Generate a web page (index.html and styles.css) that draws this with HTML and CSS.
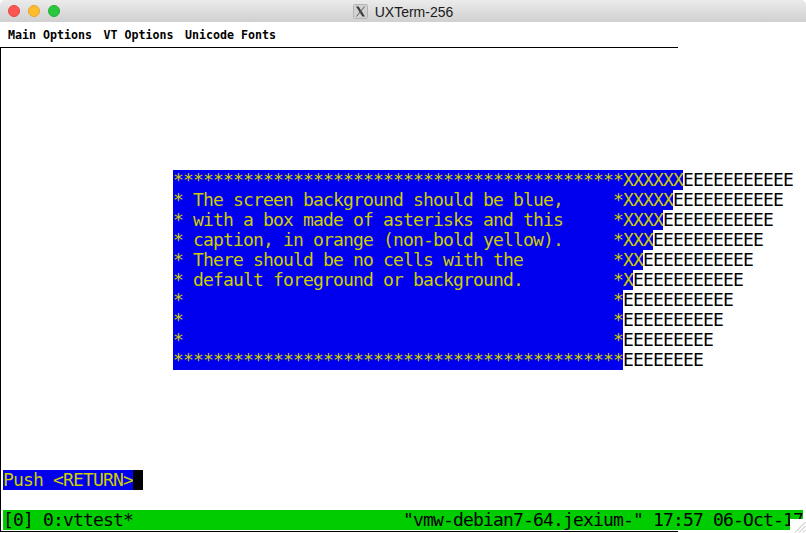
FILE: index.html
```html
<!DOCTYPE html>
<html lang="en">
<head>
<meta charset="utf-8">
<title>UXTerm-256</title>
<link rel="stylesheet" href="styles.css">
</head>
<body>
<div class="window">
  <header class="titlebar">
    <div class="lights">
      <span class="light light-red"></span>
      <span class="light light-yellow"></span>
      <span class="light light-green"></span>
    </div>
    <div class="title">
      <svg class="x-icon" width="15" height="15" viewBox="0 0 15 15">
        <rect x="0.5" y="0.5" width="14" height="14" rx="1" fill="#d2d2d2" stroke="#b4b4b4"/>
        <path d="M3 2.5h2.6l6.4 10h-2.6z" fill="#3a3a3a"/>
        <path d="M11.6 2.5L3.4 12.5" stroke="#5a5a5a" stroke-width="1" fill="none"/>
      </svg>
      <span>UXTerm-256</span>
    </div>
  </header>
  <nav class="menubar">
    <span>Main Options</span>
    <span>VT Options</span>
    <span>Unicode Fonts</span>
  </nav>
  <main class="terminal">
    <div class="screen">
<div class="row"></div>
<div class="row"></div>
<div class="row"></div>
<div class="row"></div>
<div class="row"></div>
<div class="row"></div>
<div class="row">                 <span class="blue">*********************************************XXXXXX</span>EEEEEEEEEEE</div>
<div class="row">                 <span class="blue">* The screen background should be blue,     *XXXXX</span>EEEEEEEEEEE</div>
<div class="row">                 <span class="blue">* with a box made of asterisks and this     *XXXX</span>EEEEEEEEEEE</div>
<div class="row">                 <span class="blue">* caption, in orange (non-bold yellow).     *XXX</span>EEEEEEEEEEE</div>
<div class="row">                 <span class="blue">* There should be no cells with the         *XX</span>EEEEEEEEEEE</div>
<div class="row">                 <span class="blue">* default foreground or background.         *X</span>EEEEEEEEEEE</div>
<div class="row">                 <span class="blue">*                                           *</span>EEEEEEEEEEE</div>
<div class="row">                 <span class="blue">*                                           *</span>EEEEEEEEEE</div>
<div class="row">                 <span class="blue">*                                           *</span>EEEEEEEEE</div>
<div class="row">                 <span class="blue">*********************************************</span>EEEEEEEE</div>
<div class="row"></div>
<div class="row"></div>
<div class="row"></div>
<div class="row"></div>
<div class="row"></div>
<div class="row"><span class="blue">Push &lt;RETURN&gt;</span><span class="cursor"> </span></div>
<div class="row"></div>
<div class="row status">[0] 0:vttest*                           "vmw-debian7-64.jexium-" 17:57 06-Oct-17</div>
    </div>
  </main>
</div>
<svg class="grip" width="16" height="14" viewBox="0 0 16 14">
  <rect width="16" height="14" fill="#fff"/>
  <path d="M5 13.5L15.5 3M9 13.5L15.5 7M13 13.5L15.5 11" stroke="#b8b8b8" stroke-width="1" fill="none"/>
</svg>
</body>
</html>
```
FILE: styles.css
```css
html, body {
  margin: 0;
  padding: 0;
  background: #fff;
}
body {
  width: 806px;
  height: 533px;
  overflow: hidden;
  position: relative;
}
.window {
  display: flex;
  flex-direction: column;
  height: 533px;
}
.titlebar {
  height: 22px;
  flex: none;
  display: flex;
  align-items: center;
  justify-content: center;
  position: relative;
  background: linear-gradient(#ebebeb, #d0d0d0);
  border-radius: 5px 5px 0 0;
}
.lights {
  position: absolute;
  left: 8px;
  top: 5px;
  display: flex;
  gap: 8px;
}
.light {
  width: 12px;
  height: 12px;
  border-radius: 50%;
  box-sizing: border-box;
}
.light-red { background: #fc5753; border: 1px solid #e8433f; }
.light-yellow { background: #fdbc2e; border: 1px solid #e8a52a; }
.light-green { background: #28c83f; border: 1px solid #24ae36; }
.title {
  display: flex;
  align-items: center;
  gap: 7px;
  padding-top: 2px;
  font: 14px/16px "Liberation Sans", Arial, sans-serif;
  color: #1a1a1a;
}
.x-icon { display: block; margin-top: -1px; }
.menubar {
  height: 25px;
  flex: none;
  box-sizing: border-box;
  width: 678px;
  padding: 6px 0 0 8px;
  display: flex;
  gap: 11.5px;
  font: bold 11.63px/15px "DejaVu Sans Mono", monospace;
  color: #000;
}
.terminal {
  width: 678px;
  height: 485px;
  box-sizing: border-box;
  border-top: 1px solid #000;
  border-left: 1px solid #000;
  border-bottom: 1px solid #000;
  padding: 2px 0 0 2px;
}
.screen {
  width: 800px;
  font: 18px/20px "DejaVu Sans Mono", monospace;
  letter-spacing: -0.836px;
  color: #000;
}
.row {
  height: 20px;
  white-space: pre;
}
.blue {
  display: inline-block;
  height: 20px;
  background: #0000ee;
  color: #cdcd00;
  vertical-align: top;
}
.cursor {
  display: inline-block;
  height: 20px;
  background: #000;
  vertical-align: top;
}
.status {
  background: #00cd00;
}
.grip {
  position: absolute;
  right: 0;
  bottom: 0;
}
```
